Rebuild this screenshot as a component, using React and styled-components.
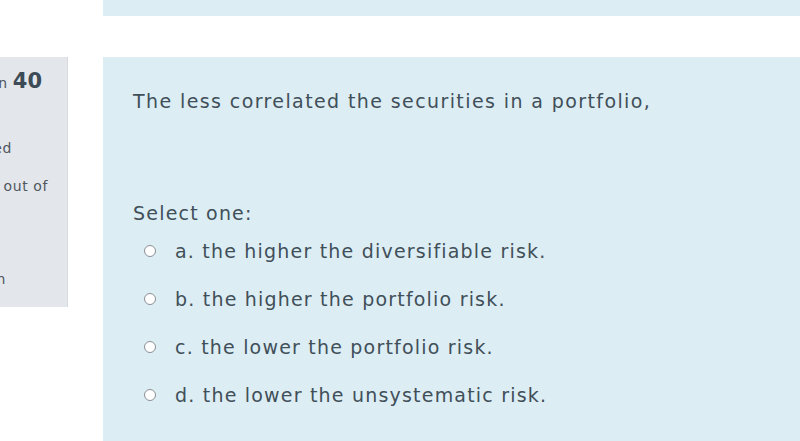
import React from "react";
import styled, { createGlobalStyle } from "styled-components";

const Global = createGlobalStyle`
  html, body { margin: 0; padding: 0; background: #ffffff; }
  body { font-family: "DejaVu Sans", "Open Sans", sans-serif; overflow: hidden; }
`;

const Page = styled.div`
  width: 800px;
  height: 441px;
  overflow: hidden;
  display: flex;
  flex-direction: column;
  gap: 41px;
`;

const TopRow = styled.div`
  display: flex;
  padding-left: 103px;
`;

const TopPanel = styled.div`
  flex: 1;
  height: 16px;
  background: #dcedf4;
`;

const Row = styled.div`
  display: flex;
  align-items: flex-start;
  gap: 35px;
  flex: 1;
`;

const Sidebar = styled.div`
  width: 68px;
  height: 250px;
  box-sizing: border-box;
  background: #e3e6eb;
  border-right: 1px solid #d6d9de;
  padding-top: 10px;
  color: #4a4f55;
  display: flex;
  flex-direction: column;
  overflow: hidden;
  white-space: nowrap;
`;

const Line = styled.div`
  display: flex;
  justify-content: flex-end;
  padding-right: ${p => p.$pr}px;
  margin-top: ${p => p.$mt || 0}px;
  font-size: 14px;
  line-height: 18px;
  letter-spacing: 0.6px;
  color: #50575e;
  b {
    font-size: 21px;
    line-height: 28px;
    font-weight: bold;
    color: #3c4b56;
    letter-spacing: 0;
  }
`;

const Panel = styled.div`
  flex: 1;
  align-self: stretch;
  background: #dcedf4;
  padding: 32px 0 0 30px;
  color: #414f59;
  font-size: 19px;
  letter-spacing: 1.2px;
  line-height: 24px;
`;

const Question = styled.div`
  letter-spacing: 1.4px;
`;

const Prompt = styled.div`
  margin-top: 88px;
`;

const Options = styled.div`
  display: flex;
  flex-direction: column;
  gap: 24px;
  margin-top: 14px;
  padding-left: 11px;
`;

const Option = styled.label`
  display: flex;
  align-items: center;
  gap: 19px;
`;

const Radio = styled.span`
  width: 12px;
  height: 12px;
  box-sizing: border-box;
  border-radius: 50%;
  background: #ffffff;
  border: 1.5px solid #8a8f94;
  flex: none;
`;

const options = [
  "a. the higher the diversifiable risk.",
  "b. the higher the portfolio risk.",
  "c. the lower the portfolio risk.",
  "d. the lower the unsystematic risk.",
];

export default function App() {
  return (
    <>
      <Global />
      <Page>
        <TopRow>
          <TopPanel />
        </TopRow>
        <Row>
          <Sidebar>
            <Line $pr={25}><span>Question <b>40</b></span></Line>
            <Line $pr={55} $mt={44}>Not yet answered</Line>
            <Line $pr={19} $mt={20}>Marked out of</Line>
            <Line $pr={61} $mt={75}>Flag question</Line>
          </Sidebar>
          <Panel>
            <Question>The less correlated the securities in a portfolio,</Question>
            <Prompt>Select one:</Prompt>
            <Options>
              {options.map(o => (
                <Option key={o}>
                  <Radio />
                  {o}
                </Option>
              ))}
            </Options>
          </Panel>
        </Row>
      </Page>
    </>
  );
}
